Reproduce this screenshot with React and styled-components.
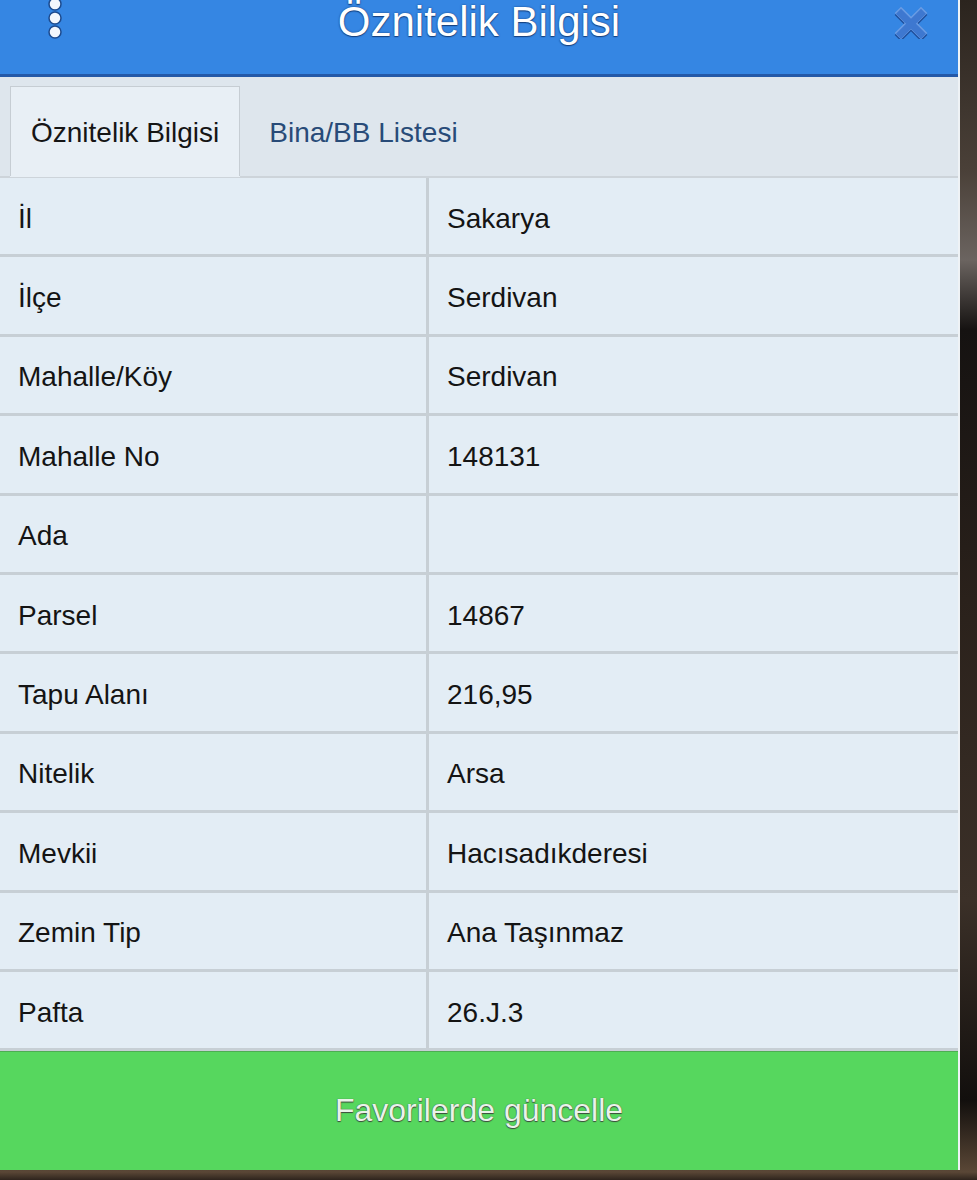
import React from "react";
import styled, { createGlobalStyle } from "styled-components";

const rows = [
  ["İl", "Sakarya"],
  ["İlçe", "Serdivan"],
  ["Mahalle/Köy", "Serdivan"],
  ["Mahalle No", "148131"],
  ["Ada", ""],
  ["Parsel", "14867"],
  ["Tapu Alanı", "216,95"],
  ["Nitelik", "Arsa"],
  ["Mevkii", "Hacısadıkderesi"],
  ["Zemin Tip", "Ana Taşınmaz"],
  ["Pafta", "26.J.3"],
];

const GlobalStyle = createGlobalStyle`
  html, body {
    margin: 0;
    padding: 0;
  }
  body {
    font-family: "Liberation Sans", Arial, sans-serif;
    background: #1d1916;
  }
`;

const Page = styled.div`
  width: 977px;
  height: 1180px;
  overflow: hidden;
  background:
    linear-gradient(180deg, #2b241e 0px, #4a4038 170px, #6b6460 260px, #151211 330px, #2a211b 600px, #3b3028 900px, #120f0d 1100px, #5a4736 1172px, #2e241d 1180px);
`;

const Panel = styled.div`
  width: 960px;
  height: 1170px;
  display: flex;
  flex-direction: column;
  background: #e2ebf3;
  border-right: 2px solid #eef2f5;
  box-sizing: border-box;
`;

const Header = styled.header`
  height: 77px;
  flex: none;
  box-sizing: border-box;
  background: #3586e3;
  border-bottom: 3px solid #2459a8;
  display: grid;
  grid-template-columns: 110px 1fr 110px;
  align-items: start;
  overflow: hidden;
`;

const HeaderTitle = styled.h1`
  margin: 0;
  padding-top: 1px;
  font-size: 42px;
  line-height: 42px;
  font-weight: 400;
  color: #ffffff;
  text-align: center;
  text-shadow: 0 0 2px #16407e, 0 1px 1px #16407e;
`;

const IconSlot = styled.div`
  display: flex;
  justify-content: center;
  padding-top: ${(p) => p.$top || 0}px;
  margin-left: ${(p) => p.$shift || 0}px;
`;

const Dots = () => (
  <svg width="20" height="40" viewBox="0 0 20 40">
    {[4, 18, 32].map((cy) => (
      <circle key={cy} cx="10" cy={cy} r="6" fill="#f3f7fd" stroke="#1d4b8f" strokeWidth="1.5" />
    ))}
  </svg>
);

const CloseIcon = () => (
  <svg width="34" height="34" viewBox="0 0 34 34">
    <g strokeLinecap="square">
      <path d="M7 8 L27 28 M27 8 L7 28" stroke="#1f4f9c" strokeWidth="9" transform="translate(0 2)" />
      <path d="M7 8 L27 28 M27 8 L7 28" stroke="#6a9ce4" strokeWidth="9" />
      <path d="M7 8 L27 28 M27 8 L7 28" stroke="#3e78d0" strokeWidth="7" transform="translate(0 0.8)" />
    </g>
  </svg>
);

const TabBar = styled.nav`
  height: 101px;
  flex: none;
  box-sizing: border-box;
  background: #dee6ed;
  border-bottom: 2px solid #cdd4da;
  padding: 9px 0 0 10px;
  display: flex;
  align-items: stretch;
`;

const Tab = styled.div`
  display: flex;
  align-items: center;
  padding: 2px 20px 0;
  margin-left: ${(p) => (p.$active ? 0 : 8)}px;
  font-size: 28px;
  color: ${(p) => (p.$active ? "#151515" : "#284b78")};
  background: ${(p) => (p.$active ? "#e8eff5" : "transparent")};
  border: 1px solid ${(p) => (p.$active ? "#c6cdd3" : "transparent")};
  border-bottom: none;
  box-shadow: ${(p) => (p.$active ? "0 1px 0 #e8eff5" : "none")};
`;

const Table = styled.div`
  display: flex;
  flex-direction: column;
  flex: none;
`;

const Row = styled.div`
  height: 79.4px;
  box-sizing: border-box;
  display: grid;
  grid-template-columns: 426px 1fr;
  border-bottom: 3px solid #c7cfd5;
`;

const Cell = styled.div`
  display: flex;
  align-items: center;
  padding: 5px 0 0 18px;
  font-size: 28px;
  color: #141414;
  background: #e3edf5;
  border-left: ${(p) => (p.$value ? "3px solid #c7cfd5" : "none")};
`;

const SaveButton = styled.button`
  flex: 1;
  border: none;
  border-top: 1px solid #4cae52;
  background: #56d75e;
  font-family: inherit;
  font-size: 32px;
  color: #e9f3e9;
  text-shadow: 0 0 1px #3c4a3c, 0 1px 1px #3c4a3c;
  cursor: pointer;
  padding: 0 0 2px;
`;

export default function App() {
  return (
    <>
      <GlobalStyle />
      <Page>
        <Panel>
          <Header>
            <IconSlot>
              <Dots />
            </IconSlot>
            <HeaderTitle>Öznitelik Bilgisi</HeaderTitle>
            <IconSlot $top={5} $shift={16}>
              <CloseIcon />
            </IconSlot>
          </Header>
          <TabBar>
            <Tab $active>Öznitelik Bilgisi</Tab>
            <Tab>Bina/BB Listesi</Tab>
          </TabBar>
          <Table>
            {rows.map(([label, value]) => (
              <Row key={label}>
                <Cell>{label}</Cell>
                <Cell $value>{value}</Cell>
              </Row>
            ))}
          </Table>
          <SaveButton>Favorilerde güncelle</SaveButton>
        </Panel>
      </Page>
    </>
  );
}
